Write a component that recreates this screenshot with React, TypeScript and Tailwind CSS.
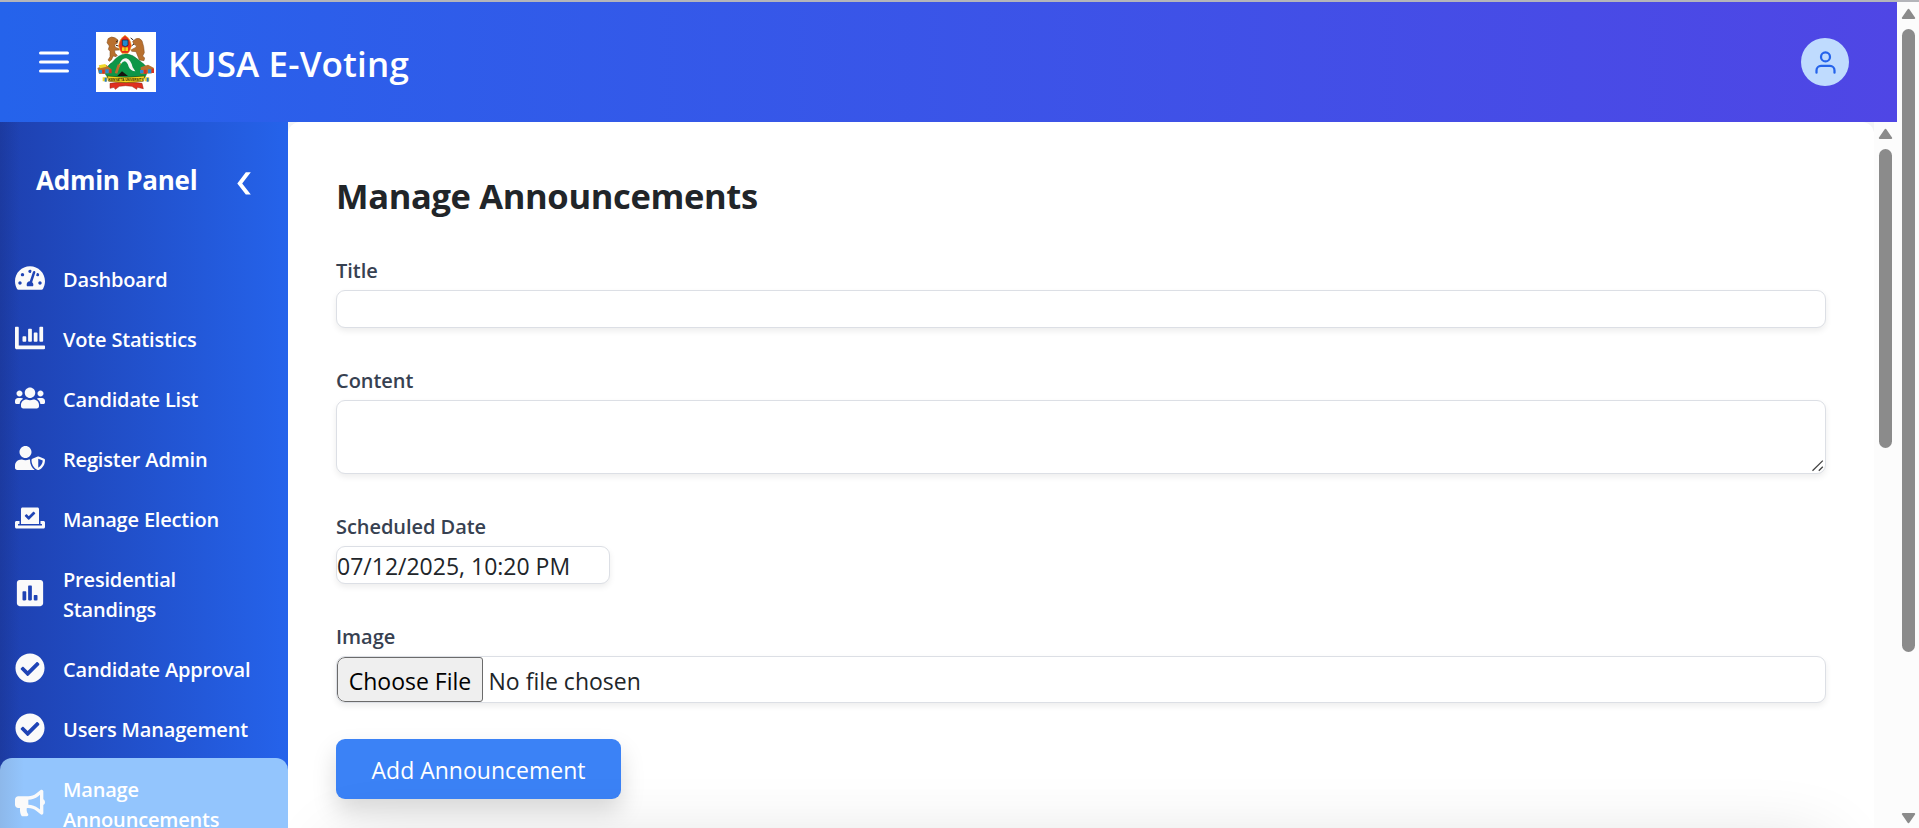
import React from "react";
import { FaTachometerAlt, FaChartBar, FaUsers, FaUserShield, FaVoteYea, FaPoll, FaCheckCircle, FaBullhorn } from "react-icons/fa";
import { FiMenu, FiUser } from "react-icons/fi";
import type { IconType } from "react-icons";

const navItems: { label: string; icon: IconType; active?: boolean }[] = [
  { label: "Dashboard", icon: FaTachometerAlt },
  { label: "Vote Statistics", icon: FaChartBar },
  { label: "Candidate List", icon: FaUsers },
  { label: "Register Admin", icon: FaUserShield },
  { label: "Manage Election", icon: FaVoteYea },
  { label: "Presidential Standings", icon: FaPoll },
  { label: "Candidate Approval", icon: FaCheckCircle },
  { label: "Users Management", icon: FaCheckCircle },
  { label: "Manage Announcements", icon: FaBullhorn, active: true },
];

function Crest() {
  return (
    <svg viewBox="0 0 180 180" className="h-[60px] w-[60px] shrink-0 bg-white">
      {/* left lion */}
      <g fill="#b8702e" stroke="#7a4718" strokeWidth="1.5">
        <path d="M36 20 Q46 11 58 18 L66 24 L64 34 L56 38 L58 46 L70 50 L70 54 L56 55 L57 64 L64 70 L60 74 L52 72 L46 84 L40 88 L36 84 L42 74 L42 58 L37 52 L40 42 L33 32 Z" />
        {/* right bear */}
        <path d="M138 26 Q130 16 120 20 L110 28 L113 36 L122 42 L118 47 L106 53 L107 58 L120 59 L126 74 L130 84 L144 86 L146 78 L140 72 L145 62 L143 44 Z" />
      </g>
      <path d="M60 30l6-4M60 40l8 2M114 36l-8 6M112 24l-8-6" stroke="#2d2018" strokeWidth="3" />
      {/* mountain */}
      <path d="M24 120 Q36 98 50 90 Q66 68 90 65 Q112 68 128 84 Q146 96 158 112 L146 138 L36 138 Z" fill="#0d9648" stroke="#0a6a34" strokeWidth="1.5" />
      {/* shield */}
      <path d="M87 10 Q104 20 106 42 Q104 56 96 64 L78 64 Q70 56 68 42 Q70 20 87 10 Z" fill="#e5301c" stroke="#f2b51c" strokeWidth="2" />
      <path d="M79 24h17v16l-8 4-9-4z" fill="#2288cf" stroke="#123" strokeWidth="2" />
      <path d="M78 46h18v11H78z" fill="#f8d31c" />
      <path d="M87 44v14" stroke="#b5320f" strokeWidth="2" />
      {/* whisk */}
      <path d="M72 92 Q80 78 91 79 Q104 82 110 106 L118 118 Q104 117 98 104 Q94 90 86 88 Q80 88 75 96 Z" fill="#f6f6f6" />
      <path d="M73 94 L68 104" stroke="#e8b020" strokeWidth="4" />
      <path d="M69 98 L60 124" stroke="#b8702e" strokeWidth="8" />
      <path d="M64 132 L78 118 L96 132 Z" fill="#17130f" />
      {/* side logs */}
      <path d="M4 108l26-10 16 14-8 12-28 2z" fill="#b8702e" />
      <path d="M8 100l20-4 4 8-20 5z" fill="#f0d829" />
      <path d="M8 114h10v10H8zM28 112h10v12H28z" fill="#2a8bd0" />
      <path d="M19 113h7v12h-7zM40 112h7v12h-7z" fill="#d93222" />
      <path d="M134 106l22-8 18 10-6 16-34 2z" fill="#b8702e" />
      <path d="M132 114h10v10h-10zM156 112h10v12h-10z" fill="#2a8bd0" />
      <path d="M144 113h8v12h-8zM167 110h7v13h-7z" fill="#d93222" />
      <path d="M20 136h14v12H20zM146 136h14v12h-14z" fill="#f0d829" />
      <path d="M26 137h6v12h-6zM152 137h6v12h-6z" fill="#2277c4" />
      {/* ribbons */}
      <path d="M42 154 Q90 146 138 154 L142 170 L124 166 L122 172 L108 163 Q88 159 70 163 L58 172 L54 166 L42 169 Z" fill="#e03020" stroke="#941c10" strokeWidth="1.5" />
      <path d="M34 132 Q90 140 146 132 L142 148 Q90 156 38 148 Z" fill="#f6d51f" stroke="#3c3206" strokeWidth="1.5" />
      <text x="90" y="148" textAnchor="middle" fontSize="9" fontWeight="700" fill="#2a2400" className="font-['Liberation_Sans',sans-serif]">KENYATTA UNIVERSITY</text>
    </svg>
  );
}

function Arrow({ down = false }: { down?: boolean }) {
  return (
    <svg viewBox="0 0 15 12" className={down ? "h-3 w-[15px] shrink-0 rotate-180" : "h-3 w-[15px] shrink-0"}>
      <path d="M7.5 1.8 L13.2 10 H1.8 Z" fill="#8b8b8b" stroke="#8b8b8b" strokeWidth="2" strokeLinejoin="round" />
    </svg>
  );
}

const labelClass = "mb-1 block pt-px text-[20px] leading-[30px] font-[560] tracking-[-0.05px] text-[#374151]";
const fieldClass = "border border-[#dcdfe5] bg-white rounded-[9px] shadow-[0_3px_6px_rgba(0,0,0,0.075)]";

export default function App() {
  return (
    <div className="flex h-[828px] flex-col overflow-hidden border-t-2 border-[#b4b5ba] bg-white font-['Open_Sans','Noto_Sans',sans-serif] text-[#212529]">
      <div className="flex min-h-0 flex-1">
        <div className="flex min-w-0 flex-1 flex-col">
          <header className="flex h-[120px] shrink-0 items-center bg-[linear-gradient(90deg,#2563eb,#4f46e5)] pr-12 pl-9">
            <FiMenu size={36} className="mr-6 text-white" />
            <Crest />
            <span className="ml-3 pt-[3px] text-[35px] leading-[48px] font-semibold tracking-[0.15px] text-white">KUSA E-Voting</span>
            <div className="ml-auto flex h-12 w-12 items-center justify-center rounded-full bg-[#bfdbfe]">
              <FiUser size={27} className="text-[#2563eb]" />
            </div>
          </header>

          <div className="flex min-h-0 flex-1">
            <aside className="w-[288px] shrink-0 overflow-hidden bg-[linear-gradient(90deg,rgba(20,35,100,0.2)_0px,rgba(20,35,100,0)_20px),linear-gradient(90deg,#1e40af,#2563eb)]">
              <div className="h-[126px] pt-7">
                <div className="flex h-[60px] items-center pr-[37px] pl-9">
                  <h2 className="text-[26px] leading-10 font-bold tracking-[-0.25px] text-white">Admin Panel</h2>
                  <svg viewBox="0 0 14 23" className="mt-[7px] ml-auto h-[23px] w-[14px]">
                    <path d="M8.8 0.3H13.8L5.2 11.5L13.8 22.6H8.8L0.3 11.5Z" fill="#fff" />
                  </svg>
                </div>
              </div>
              <nav>
                {navItems.map(({ label, icon: Icon, active }) => (
                  <a
                    key={label}
                    className={
                      active
                        ? "flex items-center gap-[18px] rounded-[12px] bg-[linear-gradient(90deg,#8db8ea,#93c5fd_24px)] p-[15px] text-white"
                        : "flex items-center gap-[18px] p-[15px] text-white"
                    }
                  >
                    <Icon size={30} className="shrink-0 text-[#fafafa]" />
                    <span className="-mb-0.5 pt-0.5 text-[20px] leading-[30px] font-semibold tracking-[-0.18px]">{label}</span>
                  </a>
                ))}
              </nav>
            </aside>

            <div className="min-w-0 flex-1 bg-[#f3f4f6]">
              <main className="h-full overflow-hidden rounded-t-[12px] bg-white px-12 pt-12">
                <h1 className="mb-[33px] text-[34.5px] leading-[52px] font-bold tracking-[-0.35px]">Manage Announcements</h1>
                <div className="mb-[37px]">
                  <label className={labelClass}>Title</label>
                  <div className={`${fieldClass} h-[38px]`} />
                </div>
                <div className="mb-[37px]">
                  <label className={labelClass}>Content</label>
                  <div className={`${fieldClass} flex h-[74px] items-end justify-end p-px`}>
                    <svg viewBox="0 0 12 12" className="h-3 w-3" stroke="#444" strokeWidth="1.3">
                      <path d="M0.5 10.8L10.8 0.6M6.8 10.8L10.8 6.8" />
                    </svg>
                  </div>
                </div>
                <div className="mb-[37px]">
                  <label className={labelClass}>Scheduled Date</label>
                  <div className={`${fieldClass} flex h-[38px] w-[274px] items-center pt-[3px] text-[23px] whitespace-nowrap`}>07/12/2025, 10:20 PM</div>
                </div>
                <div className="mb-9">
                  <label className={labelClass}>Image</label>
                  <div className={`${fieldClass} flex h-[47px] overflow-hidden text-[23px] leading-[45px]`}>
                    <div className="w-[146px] rounded-l-[8px] rounded-r-[3px] border border-[#6b6b6b] bg-[#efefef] pt-px text-center leading-[45px] text-black">Choose File</div>
                    <span className="pt-[2px] pl-[5.5px]">No file chosen</span>
                  </div>
                </div>
                <button className="block h-[60px] w-[285px] rounded-[9px] bg-[#3b82f6] pt-[3px] text-[23px] text-white shadow-[0_12px_24px_rgba(0,0,0,0.15)]">Add Announcement</button>
                <div className="mt-12 h-[200px] rounded-[12px] bg-white shadow-[0_0_72px_rgba(0,0,0,0.16)]" />
              </main>
            </div>
            <div className="flex w-[23px] shrink-0 flex-col items-center bg-[#fcfcfc] pt-1.5">
              <Arrow />
              <div className="mt-[9px] h-[299px] w-[13px] rounded-full bg-[#8b8b8b]" />
            </div>
          </div>
        </div>

        <div className="flex w-[22px] shrink-0 flex-col items-center bg-[#fcfcfc] pt-1.5 pb-1">
          <Arrow />
          <div className="mt-[9px] h-[623px] w-[13px] rounded-full bg-[#8b8b8b]" />
          <div className="mt-auto flex">
            <Arrow down />
          </div>
        </div>
      </div>
    </div>
  );
}
